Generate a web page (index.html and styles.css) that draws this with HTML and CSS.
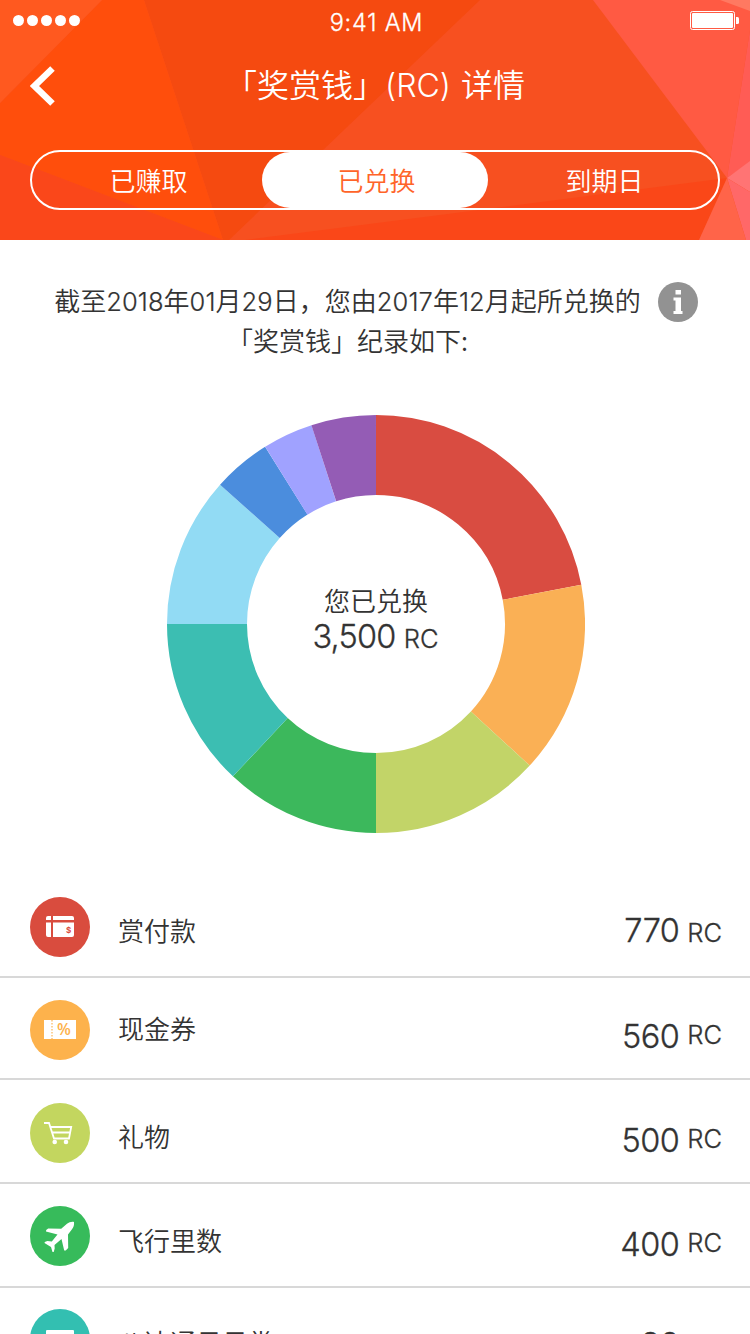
FILE: index.html
```
<!DOCTYPE html>
<html lang="zh-CN">
<head>
    <meta charset="UTF-8">
    <meta name="viewport" content="width=device-width, initial-scale=1.0">
    <title>「奖赏钱」(RC) 详情</title>
    <link rel="stylesheet" href="styles.css">
</head>
<body>

    <header class="header">
        <svg class="header-bg" viewBox="0 0 750 240" aria-hidden="true">
            <rect width="750" height="240" fill="#f75020"/>
            <polygon points="144,0 480,0 229,240 223,240" fill="#f54a10"/>
            <polygon points="102,0 144,0 223,240 0,155 0,103" fill="#ff4e0c"/>
            <polygon points="0,0 102,0 0,103" fill="#ff591f"/>
            <polygon points="0,155 223,240 0,240" fill="#fa471a"/>
            <polygon points="727,178 699,240 245,240" fill="#fa4718"/>
            <polygon points="593,0 750,0 750,30 727,178" fill="#ff5a43"/>
            <polygon points="720,0 750,0 750,11" fill="#ff7961"/>
            <polygon points="750,30 750,162 727,178" fill="#ff5c55"/>
            <polygon points="750,161 750,192 727,178" fill="#ff7474"/>
            <polygon points="727,178 750,192 750,240 746,240" fill="#ff6868"/>
            <polygon points="727,178 746,240 699,240" fill="#ff6449"/>
        </svg>

        <div class="status-bar">
            <div class="signal"><i></i><i></i><i></i><i></i><i></i></div>
            <span class="time">9:41 AM</span>
            <svg class="battery" width="50" height="20" viewBox="0 0 50 20">
                <rect x=".5" y=".5" width="44" height="18" rx="2" fill="none" stroke="#fff"/>
                <rect x="2" y="2" width="41" height="15" rx="1" fill="#fff"/>
                <path d="M46 6h1.500q1.500 0 1.500 1.500v4q0 1.500-1.500 1.500H46z" fill="#fff"/>
            </svg>
        </div>

        <div class="nav-bar">
            <svg class="back" width="26" height="40" viewBox="0 0 26 40">
                <path d="M22.500 2.500L4.500 20l18 17.500" fill="none" stroke="#fff" stroke-width="6.500"/>
            </svg>
            <h1>「奖赏钱」<span class="latin">(RC)</span>详情</h1>
        </div>

        <nav class="tabs">
            <a class="tab">已赚取</a>
            <a class="tab active">已兑换</a>
            <a class="tab">到期日</a>
        </nav>
    </header>

    <main>
        <section class="summary">
            <p>截至<b>2018</b>年<b>01</b>月<b>29</b>日，您由<b>2017</b>年<b>12</b>月起所兑换的<br>「奖赏钱」纪录如下:</p>
            <svg class="info" width="40" height="40" viewBox="0 0 40 40">
                <circle cx="20" cy="20" r="20" fill="#929292"/>
                <path d="M17.500 8h5.500v4.500h-5.500zM15.500 15.500H23V29h1.500v3H15.500v-3H17.500V18.500h-2z" fill="#fff"/>
            </svg>
        </section>

        <section class="chart">
            <svg class="donut" viewBox="-209 -209 418 418">
                <g fill="none" stroke-width="80">
                    <path d="M0-169A169 169 0 0 1 166-31.700" stroke="#d94c41"/>
                    <path d="M166-31.700A169 169 0 0 1 124.300 114.500" stroke="#fab055"/>
                    <path d="M124.300 114.500A169 169 0 0 1 0 169" stroke="#c2d468"/>
                    <path d="M0 169A169 169 0 0 1-115.700 123.200" stroke="#3cb85c"/>
                    <path d="M-115.700 123.200A169 169 0 0 1-169 0" stroke="#3cbeb2"/>
                    <path d="M-169 0A169 169 0 0 1-126.100-112.600" stroke="#92dbf4"/>
                    <path d="M-126.100-112.600A169 169 0 0 1-89.700-143.300" stroke="#4b8ddd"/>
                    <path d="M-89.700-143.300A169 169 0 0 1-52.200-160.700" stroke="#a0a2ff"/>
                    <path d="M-52.200-160.700A169 169 0 0 1 0-169" stroke="#945cb5"/>
                </g>
            </svg>
            <div class="total">
                <span class="total-label">您已兑换</span>
                <span class="amount">3,500 <small>RC</small></span>
            </div>
        </section>

        <ul class="list">
            <li class="row pay">
                <svg class="icon" viewBox="0 0 60 60">
                    <circle cx="30" cy="30" r="30" fill="#d94c3e"/>
                    <path d="M18 19h3v4h-5v-2q0-2 2-2zM23 19h19q2 0 2 2v2H23zM16 25.500h5V40h-3q-2 0-2-2zM23 25.500h21V38q0 2-2 2H23z" fill="#fff"/>
                    <text x="36" y="36" class="dollar">$</text>
                </svg>
                <span class="name">赏付款</span>
                <span class="amount">770 <small>RC</small></span>
            </li>
            <li class="row cash">
                <svg class="icon" viewBox="0 0 60 60">
                    <circle cx="30" cy="30" r="30" fill="#fdb24c"/>
                    <path d="M14 20h32v19H14z" fill="#fff"/>
                    <path d="M22 20v19" stroke="#fdc578" stroke-width="1.500" stroke-dasharray="1.500 1.500"/>
                    <text x="27" y="35" class="percent">%</text>
                </svg>
                <span class="name">现金券</span>
                <span class="amount">560 <small>RC</small></span>
            </li>
            <li class="row gift">
                <svg class="icon" viewBox="0 0 60 60">
                    <circle cx="30" cy="30" r="30" fill="#c3d65f"/>
                    <path d="M14 20h5l5 15.500h15l2.200-11.500H20.500M22 29.500h18" fill="none" stroke="#fff" stroke-width="1.800"/>
                    <circle cx="24.700" cy="39" r="2.300" fill="#fff"/>
                    <circle cx="36" cy="39" r="2.300" fill="#fff"/>
                </svg>
                <span class="name">礼物</span>
                <span class="amount">500 <small>RC</small></span>
            </li>
            <li class="row miles">
                <svg class="icon" viewBox="0 0 60 60">
                    <circle cx="30" cy="30" r="30" fill="#37bb5b"/>
                    <path d="M44 16c.3 3-.3 5.200-2.200 7.500L38 28.500l.2 13.500-2.500 2.500h-1.500L31.500 33l-7 6 .2 3.500-1 3.500h-1.200L21 41l-6.500-4 .3-1 2.500-1 4.500.5 5.700-7L16 25.500l.2-1.500 2-1.500 13 .2L37 17.800c2-1.500 4.500-2.300 7-1.800z" fill="#fff"/>
                </svg>
                <span class="name">飞行里数</span>
                <span class="amount">400 <small>RC</small></span>
            </li>
            <li class="row octopus">
                <svg class="icon" viewBox="0 0 60 60">
                    <circle cx="30" cy="30" r="30" fill="#33bfb1"/>
                    <rect x="16" y="21" width="28" height="19" rx="1" fill="#fff"/>
                </svg>
                <span class="name">八达通日日赏</span>
                <span class="amount">90 <small>RC</small></span>
            </li>
        </ul>
    </main>

</body>
</html>
```
FILE: styles.css
```
/* Basic Styles */
* {
    box-sizing: border-box;
}

body {
    width: 750px;
    height: 1334px;
    margin: 0;
    overflow: hidden;
    background-color: #fff;
    color: #333;
    font-family: 'Noto Sans CJK SC', sans-serif;
    font-weight: 350;
    font-size: 26px;
}

/* Header */
.header {
    position: relative;
    height: 240px;
    color: #fff;
}

.header-bg {
    position: absolute;
    top: 0;
    left: 0;
    width: 750px;
    height: 240px;
    z-index: -1;
}

.status-bar {
    display: grid;
    grid-template-columns: 1fr 120px 1fr;
    height: 40px;
    padding: 0 10px 0 13px;
}

.signal {
    display: flex;
    gap: 3px;
    padding-top: 15px;
}

.signal i {
    width: 11px;
    height: 11px;
    border-radius: 50%;
    background-color: #fff;
}

.time {
    padding-top: 9px;
    font-family: Inter, sans-serif;
    font-size: 23.5px;
    font-weight: 300;
    line-height: 28px;
    letter-spacing: 0.8px;
    text-align: center;
    white-space: nowrap;
    -webkit-text-stroke: 0.3px;
}

.battery {
    justify-self: end;
    margin-top: 11px;
}

.nav-bar {
    display: flex;
    height: 110px;
    padding-left: 30px;
}

.back {
    margin-top: 26px;
}

h1 {
    margin: 19px 0 0 169px;
    font-size: 32px;
    font-weight: 350;
    line-height: 48px;
    white-space: nowrap;
}

h1 .latin {
    margin-right: 10px;
    font-family: Inter, sans-serif;
    font-size: 32px;
    font-weight: 300;
    line-height: 1;
}

/* Tabs */
.tabs {
    display: flex;
    height: 60px;
    margin: 0 30px;
    border: 2px solid #fff;
    border-radius: 30px;
}

.tab {
    width: 230px;
    line-height: 55px;
    padding-left: 3px;
    text-align: center;
}

.tab.active {
    width: 226px;
    background-color: #fff;
    border-radius: 28px;
    color: #ff6429;
}

/* Summary */
.summary {
    display: flex;
    height: 175px;
    padding: 42px 0 0 54px;
}

.summary p {
    width: 587px;
    margin: -2px 0 0;
    line-height: 40px;
    text-align: center;
    white-space: nowrap;
}

.summary b {
    font-family: Inter, sans-serif;
    font-size: 25.5px;
    font-weight: 300;
    line-height: 1;
    letter-spacing: 0.1px;
    -webkit-text-stroke: 0.2px;
}

.info {
    margin-left: 17px;
}

/* Donut chart */
.chart {
    display: grid;
    width: 418px;
    height: 418px;
    margin-left: 167px;
}

.donut,
.total {
    grid-area: 1 / 1;
}

.total {
    display: flex;
    flex-direction: column;
    align-items: center;
    padding-top: 166px;
}

.total-label {
    line-height: 38px;
}

.amount {
    font-family: Inter, sans-serif;
    font-size: 32.5px;
    font-weight: 300;
    line-height: 36px;
    letter-spacing: -0.8px;
    white-space: nowrap;
    -webkit-text-stroke: 0.3px;
}

.amount small {
    font-size: 25.5px;
    letter-spacing: 0;
}

.total .amount {
    margin-right: 1px;
}

/* Redemption list */
.list {
    margin: 43px 0 0;
    padding: 0;
    list-style: none;
}

.row {
    display: flex;
    align-items: flex-start;
    height: 104px;
    padding: 21px 28px 0 30px;
    border-bottom: 2px solid #d8d8d8;
}

.row .name {
    margin: 14px 0 0 28px;
    line-height: 38px;
}

.row .amount {
    margin: 16px 0 0 auto;
    letter-spacing: -0.5px;
    word-spacing: -0.8px;
}

.icon {
    width: 60px;
    height: 60px;
}

.row.pay {
    height: 102px;
}

.row.cash {
    height: 102px;
    padding-top: 22px;
}

.row.cash .name {
    margin-top: 9px;
}

.row.cash .amount {
    margin-top: 19px;
}

.row.gift {
    padding-top: 23px;
}

.row.gift .amount {
    margin-top: 20px;
}

.row.miles {
    padding-top: 22px;
}

.row.miles .name {
    margin-top: 15px;
}

.row.miles .amount {
    margin-top: 21px;
}

.row.octopus .name {
    margin-top: 14px;
}

.row.octopus .amount {
    margin-top: 18px;
}

.row:not(.pay):not(.octopus) small {
    position: relative;
    top: -4px;
}

.dollar {
    fill: #d94c3e;
    font: bold 8px Inter, sans-serif;
}

.percent {
    fill: #fdb24c;
    font: 600 16px 'Open Sans', sans-serif;
}
```
